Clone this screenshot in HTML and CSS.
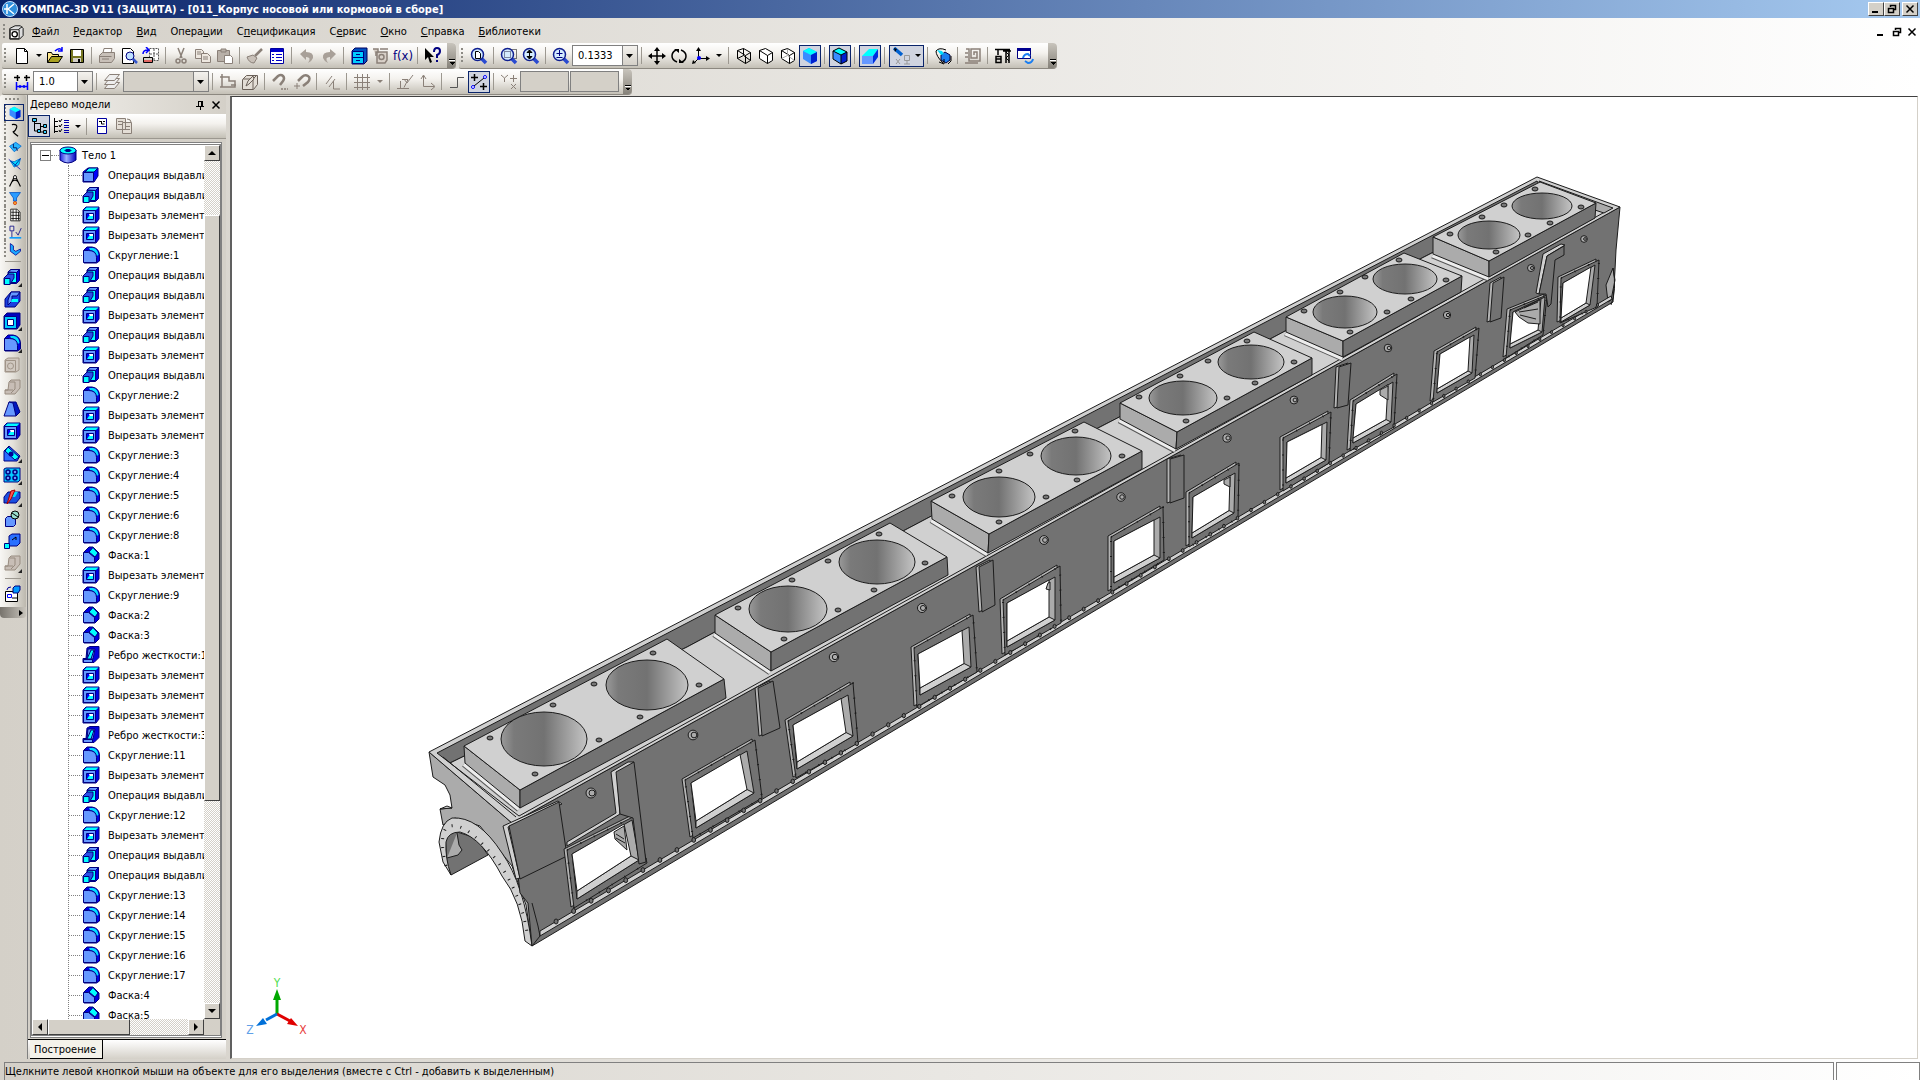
FILE: index.html
```html
<!DOCTYPE html>
<html lang="ru">
<head>
    <meta charset="UTF-8">
    <meta name="viewport" content="width=device-width, initial-scale=1.0">
    <title>КОМПАС-3D V11</title>
    <link rel="stylesheet" href="styles.css">
</head>
<body>

    <!-- Icon set -->
    <svg class="sprite" aria-hidden="true">
        <defs>
            <linearGradient id="g-cyl"><stop offset="0" stop-color="#2222dd"/><stop offset=".4" stop-color="#9db0ff"/><stop offset="1" stop-color="#0000c0"/></linearGradient>
            <linearGradient id="g-bore"><stop offset="0" stop-color="#9a9a9a"/><stop offset=".15" stop-color="#7a7a7a"/><stop offset=".5" stop-color="#727272"/><stop offset="1" stop-color="#c4c4c4"/></linearGradient>
        </defs>
        <symbol id="solid" viewBox="0 0 18 18"><path d="M1 6l5-4h10v8l-4 6H1z" fill="#00f" stroke="#000080"/><path d="M1.500 6.500h10v9h-10z" fill="#6698ff" stroke="#000080"/><path d="M3 6l4-4h9l-4 4z" fill="#0ff" stroke="#000080"/></symbol>
        <symbol id="boss" viewBox="0 0 18 18"><path d="M5 4l3-2.500h8.500v11l-3 3H5z" fill="#0000e0" stroke="#000080"/><path d="M5.500 4.500h8v10h-8z" fill="#0ff" stroke="#000080"/><path d="M5 4l3-2.500h8.500l-3 3z" fill="#6698ff" stroke="#000080"/><path d="M1 10l4-4h6v4l-4 6.500H1z" fill="#2a50e8" stroke="#000080"/><path d="M1.500 10.500h5.500v6H1.500z" fill="#0ff" stroke="#000080"/></symbol>
        <symbol id="cut" viewBox="0 0 18 18"><path d="M1 4l3-3h13v12l-3 4H1z" fill="#0000e0" stroke="#000080"/><path d="M2 4l2.500-2.500h12L14 4z" fill="#0ff"/><path d="M1.500 4.500h12v12h-12z" fill="#6698ff" stroke="#000080"/><path d="M4.500 7.500h7v6h-7z" fill="#00f" stroke="#000080"/><path d="M7 8h4v3H8z" fill="#fff"/><path d="M5 13l2-3h4v3z" fill="#0ff"/></symbol>
        <symbol id="fillet" viewBox="0 0 18 18"><path d="M2 4l3-3h5q7 1 7.500 8v6l-3 2H2z" fill="#0000e0" stroke="#000080"/><path d="M7 2h4q5 1 5.500 7l-2 1Q14 5 8 4z" fill="#0df"/><path d="M1.500 4.500h5q8 0 8 7v5h-13z" fill="#6698ff" stroke="#000080"/></symbol>
        <symbol id="chamfer" viewBox="0 0 18 18"><path d="M2 6l5-5h4l6 6v6l-4 4H2z" fill="#0000e0" stroke="#000080"/><path d="M7 6l4-4.500 5 5.500-3 4z" fill="#0ff" stroke="#000080"/><path d="M1.500 6.500h5l6 5v5h-11z" fill="#6698ff" stroke="#000080"/></symbol>
        <symbol id="rib" viewBox="0 0 18 18"><path d="M5 2l3-1.500h9v11l-5 5H1v-4h3z" fill="#0000e0" stroke="#000080"/><path d="M6 3h7l-2 10H5z" fill="#6698ff" stroke="#000080"/><path d="M9 4h3L9 13H5z" fill="#0ff" stroke="#000080"/><path d="M1.500 13.500h9v3h-9z" fill="#6698ff" stroke="#000080"/></symbol>
        <symbol id="body" viewBox="0 0 18 18"><path d="M1 4v10q8 6 16 0V4z" fill="url(#g-cyl)" stroke="#000080"/><ellipse cx="9" cy="4.500" rx="8" ry="3.500" fill="#0ff" stroke="#000080"/><ellipse cx="9" cy="4.500" rx="3" ry="1" fill="#008" stroke="#000080"/></symbol>
        <symbol id="new" viewBox="0 0 18 18"><path d="M3.500 1.500h8l3 3v12h-11z" fill="#fff" stroke="#000"/><path d="M11.500 1.500v3h3" fill="none" stroke="#000"/></symbol>
        <symbol id="open" viewBox="0 0 18 18"><path d="M1.500 15.500v-10h4l1 2h6v2" fill="#ffe78a" stroke="#000"/><path d="M1.500 15.500l4-6h11l-4 6z" fill="#a8a020" stroke="#000"/><path d="M9 4q4-4 7-1M16 0v4h-4" fill="none" stroke="#00f" stroke-width="1.500"/></symbol>
        <symbol id="save" viewBox="0 0 18 18"><path d="M2.500 2.500h13v13h-13z" fill="#777722" stroke="#000"/><path d="M5 3h8v6H5z" fill="#fff"/><path d="M5 11h8v4H5z" fill="#d4d0c8"/><path d="M10 12h2v3h-2z"/></symbol>
        <symbol id="print" viewBox="0 0 18 18"><g fill="#c8c0b8" stroke="#8a8078"><path d="M5 6l1-4.500h8L13 6z" fill="#fff"/><path d="M1.500 8.500l3-3h12v6l-3 4h-12z"/><path d="M2 9.500h11.500M4 12h7"/></g></symbol>
        <symbol id="preview" viewBox="0 0 18 18"><path d="M2.500 1.500h8l3 3v12h-11z" fill="#fff" stroke="#000"/><circle cx="10" cy="9" r="4" fill="#bfe0ff" stroke="#000080"/><path d="M13 12l4 4" stroke="#3355cc" stroke-width="2.500"/></symbol>
        <symbol id="wizard" viewBox="0 0 18 18"><path d="M7.500 1.500h9v12h-9zM12 2v11M8 7h9" fill="#fff" stroke="#555" stroke-dasharray="2 1"/><path d="M1.500 10.500h9v5h-9z" fill="#d4d0c8" stroke="#000"/><path d="M2 14h8" stroke="#e00"/><path d="M1 7q0-4 5-4M4 0l3 3-3 3" fill="none" stroke="#00f" stroke-width="1.500"/></symbol>
        <symbol id="scissors" viewBox="0 0 18 18"><g fill="none" stroke="#8a8078" stroke-width="1.500"><path d="M6 1l4 10M12 1L8 11"/><circle cx="6" cy="14" r="2"/><circle cx="12" cy="14" r="2"/></g></symbol>
        <symbol id="copy" viewBox="0 0 18 18"><g fill="#eee8e0" stroke="#8a8078"><path d="M1.500 2.500h6l2 2v7h-8z"/><path d="M7.500 6.500h6l3 3v6h-9z"/><path d="M3 5h4M3 7h4M9 10h5M9 12h5"/></g></symbol>
        <symbol id="paste" viewBox="0 0 18 18"><g fill="#b8b0a8" stroke="#8a8078"><path d="M1.500 3.500h12v11h-12z"/><path d="M5 2h5v3H5z"/><path d="M8.500 8.500h6l2 2v6h-8z" fill="#fff"/></g></symbol>
        <symbol id="brush" viewBox="0 0 18 18"><path d="M1 10l6-2 4 3-3 5q-5 0-7-6z" fill="#c8c0b8" stroke="#8a8078"/><path d="M9 9l7-7" stroke="#8a8078" stroke-width="2.500"/></symbol>
        <symbol id="props" viewBox="0 0 18 18"><path d="M2.500 1.500h13v15h-13z" fill="#fff" stroke="#0000a0"/><path d="M3 2h12v3H3z" fill="#00c"/><path d="M4 7.500h2M4 10.500h2M4 13.500h2M8 7.500h6M8 10.500h6M8 13.500h6" stroke="#00c"/></symbol>
        <symbol id="undo" viewBox="0 0 18 18"><path d="M2 7l6-5v3q8 0 7 6-1 3-5 5 4-6-2-6v3z" fill="#a8a098"/></symbol>
        <symbol id="redo" viewBox="0 0 18 18"><path d="M16 7l-6-5v3Q2 5 3 11q1 3 5 5-4-6 2-6v3z" fill="#a8a098"/></symbol>
        <symbol id="vars" viewBox="0 0 18 18"><path d="M2 4l3-3h12v13l-3 3H2z" fill="#0050c0" stroke="#000060"/><path d="M2.500 4.500h11v12h-11z" fill="#0cf" stroke="#000080"/><path d="M2 10.500h11M6 7.500h4M6 13.500h4" stroke="#000080"/></symbol>
        <symbol id="lib" viewBox="0 0 18 18"><g fill="#d8d0c8" stroke="#8a8078" stroke-width="1.500"><path d="M5 5h10v8l-2 3H5z"/><circle cx="9.500" cy="10" r="2.500"/><path d="M1 2h5v3H4v4M8 2h8"/></g></symbol>
        <symbol id="help" viewBox="0 0 18 18"><path d="M1 1v12l3-3 2 6 2-1-2-5h4z"/><path d="M10 5q0-4 3-4t3 3-3 4v3M13 13v2" fill="none" stroke="#000080" stroke-width="2"/></symbol>
        <symbol id="zoom" viewBox="0 0 18 18"><path d="M11 11l5 5" stroke="#2a4ad0" stroke-width="3.500"/><circle cx="7.500" cy="7.500" r="6" fill="#d4ecff" stroke="#102090" stroke-width="1.500"/></symbol>
        <symbol id="zoom-page" viewBox="0 0 18 18"><use href="#zoom"/><path d="M5.500 4.500h3l2 2v5h-5z" fill="#fff" stroke="#000"/></symbol>
        <symbol id="zoom-win" viewBox="0 0 18 18"><path d="M8.500 2.500h8v9h-8z" fill="none" stroke="#000" stroke-dasharray="1 1"/><use href="#zoom"/><path d="M4.500 4.500h6v6h-6z" fill="none" stroke="#224" stroke-dasharray="1 1"/></symbol>
        <symbol id="zoom-dyn" viewBox="0 0 18 18"><use href="#zoom"/><path d="M7.500 3v9M5 5.500h5L7.500 3zM5 9.500h5L7.500 12z" stroke="#000"/></symbol>
        <symbol id="zoom-pm" viewBox="0 0 18 18"><use href="#zoom"/><path d="M7.500 3v6M4.500 6.500h6M4.500 10.500h6" stroke="#000080"/></symbol>
        <symbol id="move" viewBox="0 0 18 18"><path d="M9 2v14M2 9h14" stroke="#000" stroke-width="1.500"/><path d="M9 0l3 4H6zM9 18l3-4H6zM0 9l4-3v6zM18 9l-4-3v6z"/></symbol>
        <symbol id="rotate" viewBox="0 0 18 18"><path d="M7 15Q2 13 2 9t4-6M11 3q5 2 5 6t-4 6" fill="none" stroke="#000" stroke-width="1.500"/><path d="M4 2h5v4zM14 16H9v-4z"/></symbol>
        <symbol id="orient" viewBox="0 0 18 18"><path d="M6.500 2v9.500H16M7 11l-5 5" fill="none" stroke="#000"/><path d="M6.500 0l2.500 4H4zM18 11.500l-4-2.500v5zM0 17l1-4 3 3z"/><circle cx="7" cy="11" r="2" fill="#00f"/></symbol>
        <symbol id="wire" viewBox="0 0 18 18"><path d="M2.500 3.500l6-2 7 4v8l-5 3-8-5zM2.500 3.500l8 5v8M10.500 8.500l5-3M8.500 1.500v7l7 5M8.500 8.500l-6 3" fill="none" stroke="#000"/></symbol>
        <symbol id="nohid" viewBox="0 0 18 18"><path d="M2.500 3.500l6-2 7 4v8l-5 3-8-5zM2.500 3.500l8 5v8M10.500 8.500l5-3" fill="#fff" stroke="#000"/></symbol>
        <symbol id="thin" viewBox="0 0 18 18"><use href="#nohid"/><path d="M8.500 2v6.500l7 5M8.500 8.500l-6 3" fill="none" stroke="#aaa"/></symbol>
        <symbol id="shade" viewBox="0 0 18 18"><path d="M2 4l6-3 8 4v9l-6 3-8-5z" fill="#3a8cff"/><path d="M2 4l6-3 8 4-6 3z" fill="#0ff"/><path d="M10 8l6-3v9l-6 3z" fill="#0020d0"/></symbol>
        <symbol id="shade-edge" viewBox="0 0 18 18"><use href="#shade"/><path d="M2 4l6-3 8 4v9l-6 3-8-5zM2 4l8 4v9M10 8l6-3" fill="none" stroke="#000"/></symbol>
        <symbol id="persp" viewBox="0 0 18 18"><path d="M1 9l7-7h9l-5 7z" fill="#0ff"/><path d="M1 9h11v8H1z" fill="#6698ff"/><path d="M12 9l5-7v8l-5 7z" fill="#0030e0"/></symbol>
        <symbol id="light" viewBox="0 0 18 18"><path d="M1 1l8 7" stroke="#0060d0" stroke-width="3.500"/><path d="M1 1l3 1-2 3z"/><path d="M11.500 8.500h5v5h-5zM14 14v3M11 17h6M3 12l4 5M7 12l-4 5" fill="none" stroke="#999"/></symbol>
        <symbol id="rebuild" viewBox="0 0 18 18"><path d="M7 8l4-3 5 3v5l-4 3-5-3z" fill="#1a7ef0" stroke="#004"/><path d="M12 3Q5 0 2 4q0 5 7 12M5 15l5 2V12M17 9v5l-3 3" fill="none" stroke="#000"/><path d="M3 3l5 1 2 3-3 1z" fill="#0df"/></symbol>
        <symbol id="spiral" viewBox="0 0 18 18"><g fill="none" stroke="#8a8078" stroke-width="1.500"><path d="M2 2h3v12h11V2H7v9h6V5h-3v3"/><path d="M1 6h3M1 10h3M1 16h13"/></g></symbol>
        <symbol id="crane" viewBox="0 0 18 18"><path d="M1 2.500h15M12 2v14M15 2v14M9 4h8M4 3v5M2 9.500h5v6H2zM2 12h5" fill="none" stroke="#000" stroke-width="1.500"/><path d="M12 5l3 3-3 3 3 3" fill="none" stroke="#000"/></symbol>
        <symbol id="refresh" viewBox="0 0 18 18"><path d="M1.500 1.500h13v10h-13z" fill="#fff" stroke="#000080"/><path d="M1 1h14v3H1z" fill="#000090"/><path d="M7 11q1-4 5-4l2 2M17 12q-1 4-5 4l-3-2" fill="none" stroke="#1a7ef0" stroke-width="2"/></symbol>
        <symbol id="step" viewBox="0 0 18 18"><path d="M1 4.500h6M4.500 2v6M11 4.500h6M13.500 2v6" stroke="#000" stroke-width="1.500"/><path d="M3 13.500h12M3.500 9v8M14.500 9v8M7 12v3M11 12v3" stroke="#00f" stroke-width="1.500"/></symbol>
        <symbol id="layers" viewBox="0 0 18 18"><g fill="#eee" stroke="#8a8078"><path d="M1.500 15.500l5-6h10l-5 6z"/><path d="M1.500 11.500l5-6h10l-5 6z"/><path d="M1.500 7.500l5-6h10l-5 6z"/></g></symbol>
        <symbol id="contour" viewBox="0 0 18 18"><g fill="none" stroke="#8a8078" stroke-width="1.500"><path d="M3 1v13h13V8h-6V4H1M1 14h4M12 12h5"/></g></symbol>
        <symbol id="sketch" viewBox="0 0 18 18"><g fill="#e4ded6" stroke="#6a6058"><path d="M1.500 6.500l4-4h11v9l-4 5h-11z"/><path d="M12 6v10M12 6l4-4M2 6h10"/><path d="M5 13l2-5 5-5 1 3-5 5z"/></g></symbol>
        <symbol id="magnet" viewBox="0 0 18 18"><path d="M2 8l5-5q3-2 5 0t0 5l-3 4" fill="none" stroke="#8a8078" stroke-width="2.500"/><path d="M10 16h7" stroke="#8a8078" stroke-dasharray="2 1" stroke-width="1.500"/></symbol>
        <symbol id="magnet2" viewBox="0 0 18 18"><path d="M5 8l4-4q3-3 6-1t0 6l-5 4" fill="none" stroke="#8a8078" stroke-width="2.500"/><path d="M1 13h6M4 10v6" stroke="#8a8078"/></symbol>
        <symbol id="paral" viewBox="0 0 18 18"><path d="M3 11l6-8M6 14l6-8M10.500 8v8H17" fill="none" stroke="#8a8078"/></symbol>
        <symbol id="grid" viewBox="0 0 18 18"><path d="M1 4.500h16M1 9.500h16M1 14.500h16M4.500 1v16M9.500 1v16M14.500 1v16" stroke="#8a8078"/></symbol>
        <symbol id="check" viewBox="0 0 18 18"><path d="M1 15.500h12M4.500 8v7M6 6.500h6l-4 8M8 6l3 4 6-8" fill="none" stroke="#8a8078"/></symbol>
        <symbol id="lcs" viewBox="0 0 18 18"><path d="M5.500 3v10.500H16M3 6l2.500-4L8 6M13 10l4 3.500-4 3.500" fill="none" stroke="#8a8078"/></symbol>
        <symbol id="ortho" viewBox="0 0 18 18"><path d="M2 14.500h7.500v-10H16" fill="none" stroke="#555"/></symbol>
        <symbol id="snap" viewBox="0 0 18 18"><path d="M1 4.500h7M4.500 1v7M10 13.500h7M13.500 10v7" stroke="#000" stroke-width="1.500"/><path d="M4 13l10-8" stroke="#000"/><circle cx="3" cy="14" r="1.500" fill="#fff" stroke="#00f"/><circle cx="15" cy="4" r="1.500" fill="#fff" stroke="#00f"/></symbol>
        <symbol id="yx" viewBox="0 0 18 18"><path d="M1 2l3.500 3L8 2M4.500 5v4M10 5.500h7M13.500 2v7M11 11l5 5M16 11l-5 5" fill="none" stroke="#8a8078"/></symbol>
        <symbol id="spline" viewBox="0 0 18 18"><path d="M5 2q8-1 6 4T7 11t6 6" fill="none" stroke="#000" stroke-width="1.500"/></symbol>
        <symbol id="surf" viewBox="0 0 18 18"><path d="M2 8l8-5 7 5-9 7z" fill="#29b6ff" stroke="#06c"/><path d="M7 5v5h4l1 4" fill="none" stroke="#004"/></symbol>
        <symbol id="surf2" viewBox="0 0 18 18"><path d="M3 5l5 1 8-4-2 8-6 3z" fill="#0df" stroke="#06c"/><path d="M1 3l15 13M16 2L8 12" stroke="#009"/></symbol>
        <symbol id="compass" viewBox="0 0 18 18"><path d="M9 2l-7 14M9 2l7 14M5 10q4-4 8 0" fill="none" stroke="#000" stroke-width="1.500"/><circle cx="9" cy="4" r="2" fill="#fff" stroke="#000"/></symbol>
        <symbol id="funnel" viewBox="0 0 18 18"><path d="M2 2h14l-5 7v4H7V9z" fill="#2a9cff" stroke="#0050c0"/><circle cx="9" cy="15.500" r="2" fill="#fa3" stroke="#c30"/></symbol>
        <symbol id="sheet" viewBox="0 0 18 18"><path d="M3.500 1.500h8l4 4v11h-12zM6.500 2v14M10.500 2v14M13.500 5v11M4 5.500h11M4 9.500h11M4 13.500h11" fill="#fff" stroke="#000"/></symbol>
        <symbol id="dims" viewBox="0 0 18 18"><path d="M2.500 1.500h5v6h-5zM5 8v8M10 9l3 4 4-9" fill="none" stroke="#000080"/><path d="M2 16.500h15" stroke="#09f" stroke-width="2"/></symbol>
        <symbol id="sheetmet" viewBox="0 0 18 18"><path d="M3 2l4 3v5l3 2 6-3v3l-6 5-7-5z" fill="#1aa8ff" stroke="#000090"/></symbol>
        <symbol id="kin" viewBox="0 0 18 18"><path d="M2 9l6-7h9v9l-5 6H2z" fill="#1a40e0" stroke="#000080"/><path d="M8 2h9l-3 4H9v5L5 15v-5z" fill="#6698ff" stroke="#000080"/><path d="M9 9h6v3H8z" fill="#0ff"/></symbol>
        <symbol id="cut2" viewBox="0 0 18 18"><path d="M1 4l3-3h13v12l-3 4H1z" fill="#0000c0" stroke="#000080"/><path d="M1.500 4.500h12v12h-12z" fill="#0cf" stroke="#000080"/><path d="M4.500 7.500h6v6h-6z" fill="#fff" stroke="#000080"/></symbol>
        <symbol id="gray1" viewBox="0 0 18 18"><g fill="#d0c8c0" stroke="#a09488"><path d="M2 4l3-2h11v12l-3 2H2z"/><path d="M2.500 4.500h10v11h-10z"/><circle cx="7.500" cy="10" r="3"/></g></symbol>
        <symbol id="gray2" viewBox="0 0 18 18"><g fill="#c8beb6" stroke="#988c80"><path d="M6 4l2-2h9v8l-5 6H2v-4h3z"/><path d="M7 4h5v7l-4 4M2 12h8"/></g></symbol>
        <symbol id="draft" viewBox="0 0 18 18"><path d="M6 2h7l4 10-4 4z" fill="#0018c0" stroke="#000080"/><path d="M6 2l4 1 3 13H1z" fill="#6698ff" stroke="#000080"/></symbol>
        <symbol id="section" viewBox="0 0 18 18"><path d="M1 7l5-5 11 10-3 5H1z" fill="#2a6cff" stroke="#000080"/><path d="M5 3l11 10-4 3L2 7z" fill="#0ff" stroke="#000080"/><circle cx="8" cy="10" r="2.500" fill="#009"/></symbol>
        <symbol id="array" viewBox="0 0 18 18"><path d="M1 3l2-1h14v12l-2 2H1z" fill="#0cf" stroke="#000080"/><g fill="#6698ff" stroke="#000080" stroke-width="1.500"><circle cx="5" cy="6" r="2"/><circle cx="12" cy="6" r="2"/><circle cx="5" cy="12" r="2"/><circle cx="12" cy="12" r="2"/></g></symbol>
        <symbol id="slice" viewBox="0 0 18 18"><path d="M1 9l4-5h12v6l-4 5H1z" fill="#1a50e0" stroke="#000080"/><path d="M10 4h5l-3 5H8z" fill="#0df"/><path d="M8 3L4 16l4-5 4-9z" fill="#f55" stroke="#a00"/></symbol>
        <symbol id="bool" viewBox="0 0 18 18"><path d="M2.500 8.500l2-2h8v8l-2 2h-8z" fill="#6698ff" stroke="#000080"/><circle cx="12" cy="5" r="4" fill="#9dc" stroke="#000"/><path d="M9 3l6 4" stroke="#000"/></symbol>
        <symbol id="detail" viewBox="0 0 18 18"><path d="M6 4l3-2h8v9l-3 3H6z" fill="#2a70ff" stroke="#000080"/><path d="M1.500 11.500h5v5h-5z" fill="#0ff" stroke="#000080"/><path d="M9 8l4-3M13 5v3" stroke="#000"/></symbol>
        <symbol id="tosheet" viewBox="0 0 18 18"><path d="M2.500 6.500h12v10h-12zM9 13h6" fill="#fff" stroke="#000"/><path d="M4.500 9.500h4v3h-4z" fill="#fff" stroke="#00f"/><path d="M10 3l2-2h5v4l-2 3h-5z" fill="#09f" stroke="#000080"/><path d="M4 5q0-3 4-3" fill="none" stroke="#009"/></symbol>
        <symbol id="tree" viewBox="0 0 18 18"><path d="M4.500 3v11h3M4.500 6.500h6M10.500 6v9h3M10 9.500h4" fill="none" stroke="#000"/><path d="M2.500 1.500h4v3h-4zM7.500 12.500h3v3h-3zM13.500 7.500h3v3h-3zM13.500 13.500h3v3h-3z" fill="#3cf" stroke="#000"/></symbol>
        <symbol id="list" viewBox="0 0 18 18"><path d="M2.500 1v15M2 4.500h4M2 9.500h4M2 14.500h4M7 3l1 2 2-3M7 8l1 2 2-3M7 13l1 2 2-3" fill="none" stroke="#000"/><path d="M12 3.500h5M12 5.500h5M12 8.500h5M12 10.500h5M12 13.500h5M12 15.500h5" stroke="#00a"/></symbol>
        <symbol id="doc" viewBox="0 0 18 18"><path d="M4.500 1.500h9v15h-9zM5 9.500h8" fill="#fff" stroke="#0000a0"/><path d="M6 4.500h3M8.500 4v3h3M10 4.500h2" fill="none" stroke="#000"/></symbol>
        <symbol id="doc2" viewBox="0 0 18 18"><path d="M1.500 1.500h9v11h-9zM7.500 5.500h9v11h-9zM3 4.500h5M3 7.500h4M10 9.500h5M10 12.500h5M12 2q4 0 4 3" fill="#e4ded6" stroke="#8a8078"/></symbol>
        <symbol id="cube" viewBox="0 0 18 18"><path d="M2 5l6-3h6l3 3v8l-4 4H2z" fill="#ddd" stroke="#000"/><path d="M2.500 6.500h10v10h-10z" fill="#fff" stroke="#000"/><circle cx="7.500" cy="11.500" r="3" fill="#fff" stroke="#000" stroke-width="1.500"/><path d="M12 6l4-3" stroke="#000"/></symbol>
        <symbol id="w-min" viewBox="0 0 10 10"><path d="M1 8h6" stroke="#000" stroke-width="2"/></symbol>
        <symbol id="w-rest" viewBox="0 0 10 10"><path d="M3.500 3V1.500h5v4H7M1.500 4.500h5v4h-5zM3 1.500h6M1 4.500h6" fill="none" stroke="#000" stroke-width="1.500"/></symbol>
        <symbol id="w-close" viewBox="0 0 10 10"><path d="M1.500 1.500l7 7M8.500 1.500l-7 7" stroke="#000" stroke-width="1.500"/></symbol>
        <symbol id="pin" viewBox="0 0 10 10"><path d="M3 1.500h4M3.500 1v5M6.500 1v5M7.500 1v5M1 6.500h8M5.500 7v3" stroke="#000"/></symbol>
    </svg>

    <header class="titlebar">
        <svg class="logo" viewBox="0 0 16 16"><circle cx="8" cy="8" r="7.500" fill="#2f8fdc" stroke="#bfe0ff"/><path d="M5 3v10M6 8l6-5M6 8l6 5M2 8h3" stroke="#fff" stroke-width="1.500" fill="none"/></svg>
        <h1>КОМПАС-3D V11 (ЗАЩИТА) - [011_Корпус носовой или кормовой в сборе]</h1>
        <div class="winbtns">
            <button aria-label="Свернуть"><svg><use href="#w-min"/></svg></button>
            <button aria-label="Развернуть"><svg><use href="#w-rest"/></svg></button>
            <button class="close" aria-label="Закрыть"><svg><use href="#w-close"/></svg></button>
        </div>
    </header>

    <nav class="menubar">
        <i class="grip"></i>
        <svg class="ico"><use href="#cube"/></svg>
        <a href="#"><u>Ф</u>айл</a>
        <a href="#"><u>Р</u>едактор</a>
        <a href="#"><u>В</u>ид</a>
        <a href="#">Опера<u>ц</u>ии</a>
        <a href="#">С<u>п</u>ецификация</a>
        <a href="#">С<u>е</u>рвис</a>
        <a href="#"><u>О</u>кно</a>
        <a href="#"><u>С</u>правка</a>
        <a href="#"><u>Б</u>иблиотеки</a>
        <div class="mdibtns">
            <button aria-label="Свернуть документ"><svg><use href="#w-min"/></svg></button>
            <button aria-label="Восстановить документ"><svg><use href="#w-rest"/></svg></button>
            <button aria-label="Закрыть документ"><svg><use href="#w-close"/></svg></button>
        </div>
    </nav>

    <div class="toolrow">
        <div class="toolbar">
            <i class="grip"></i>
            <button class="tb" aria-label="Создать"><svg><use href="#new"/></svg></button><button class="drop" aria-label="Список"></button>
            <button class="tb" aria-label="Открыть"><svg><use href="#open"/></svg></button>
            <button class="tb" aria-label="Сохранить"><svg><use href="#save"/></svg></button>
            <i class="sep"></i>
            <button class="tb" aria-label="Печать"><svg><use href="#print"/></svg></button>
            <button class="tb" aria-label="Просмотр"><svg><use href="#preview"/></svg></button>
            <button class="tb" aria-label="Мастер"><svg><use href="#wizard"/></svg></button>
            <i class="sep"></i>
            <button class="tb" aria-label="Вырезать"><svg><use href="#scissors"/></svg></button>
            <button class="tb" aria-label="Копировать"><svg><use href="#copy"/></svg></button>
            <button class="tb" aria-label="Вставить"><svg><use href="#paste"/></svg></button>
            <i class="sep"></i>
            <button class="tb" aria-label="Копировать свойства"><svg><use href="#brush"/></svg></button>
            <button class="tb" aria-label="Свойства"><svg><use href="#props"/></svg></button>
            <i class="sep"></i>
            <button class="tb" aria-label="Отменить"><svg><use href="#undo"/></svg></button>
            <button class="tb" aria-label="Повторить"><svg><use href="#redo"/></svg></button>
            <i class="sep"></i>
            <button class="tb" aria-label="Менеджер"><svg><use href="#vars"/></svg></button>
            <button class="tb" aria-label="Библиотека"><svg><use href="#lib"/></svg></button>
            <button class="tb fx">f(x)</button>
            <i class="sep"></i>
            <button class="tb" aria-label="Справка"><svg><use href="#help"/></svg></button>
            <i class="cap"></i>
        </div>
        <div class="toolbar">
            <i class="grip"></i>
            <button class="tb" aria-label="Показать все"><svg><use href="#zoom-page"/></svg></button>
            <i class="sep"></i>
            <button class="tb" aria-label="Увеличить рамкой"><svg><use href="#zoom-win"/></svg></button>
            <button class="tb" aria-label="Приблизить"><svg><use href="#zoom-dyn"/></svg></button>
            <i class="sep"></i>
            <button class="tb" aria-label="Масштаб"><svg><use href="#zoom-pm"/></svg></button>
            <select class="combo scale" aria-label="Текущий масштаб"><option>0.1333</option></select>
            <i class="sep"></i>
            <button class="tb" aria-label="Сдвинуть"><svg><use href="#move"/></svg></button>
            <button class="tb" aria-label="Повернуть"><svg><use href="#rotate"/></svg></button>
            <button class="tb" aria-label="Ориентация"><svg><use href="#orient"/></svg></button><button class="drop roomy" aria-label="Список"></button>
            <i class="sep"></i>
            <button class="tb" aria-label="Каркас"><svg><use href="#wire"/></svg></button>
            <button class="tb" aria-label="Без невидимых"><svg><use href="#nohid"/></svg></button>
            <button class="tb" aria-label="Тонкие линии"><svg><use href="#thin"/></svg></button>
            <button class="tb on" aria-label="Полутоновое"><svg><use href="#shade"/></svg></button>
            <i class="sep"></i>
            <button class="tb on" aria-label="С каркасом"><svg><use href="#shade-edge"/></svg></button>
            <i class="sep"></i>
            <button class="tb on" aria-label="Перспектива"><svg><use href="#persp"/></svg></button>
            <i class="sep"></i>
            <button class="tb on wide" aria-label="Упрощения"><svg><use href="#light"/></svg><i class="arrow"></i></button>
            <i class="sep"></i>
            <button class="tb" aria-label="Перестроить"><svg><use href="#rebuild"/></svg></button>
            <i class="sep"></i>
            <button class="tb" aria-label="Разнести"><svg><use href="#spiral"/></svg></button>
            <i class="sep"></i>
            <button class="tb" aria-label="Конструкции"><svg><use href="#crane"/></svg></button>
            <button class="tb" aria-label="Обновить"><svg><use href="#refresh"/></svg></button>
            <i class="cap far"></i>
        </div>
    </div>

    <div class="toolrow">
        <div class="toolbar">
            <i class="grip"></i>
            <button class="tb" aria-label="Шаг"><svg><use href="#step"/></svg></button>
            <select class="combo stepval" aria-label="Шаг курсора"><option>1.0</option></select>
            <i class="sep"></i>
            <button class="tb" aria-label="Слои"><svg><use href="#layers"/></svg></button>
            <select class="combo layer" aria-label="Слой" disabled><option></option></select>
            <i class="sep"></i>
            <button class="tb" aria-label="Контур"><svg><use href="#contour"/></svg></button>
            <button class="tb" aria-label="Эскиз"><svg><use href="#sketch"/></svg></button>
            <i class="sep"></i>
            <button class="tb" aria-label="Привязки"><svg><use href="#magnet"/></svg></button>
            <button class="tb" aria-label="Запрет привязок"><svg><use href="#magnet2"/></svg></button>
            <i class="sep"></i>
            <button class="tb" aria-label="Параметризация"><svg><use href="#paral"/></svg></button>
            <i class="sep"></i>
            <button class="tb" aria-label="Сетка"><svg><use href="#grid"/></svg></button><button class="drop roomy off" aria-label="Список"></button>
            <i class="sep"></i>
            <button class="tb" aria-label="Проверка"><svg><use href="#check"/></svg></button>
            <button class="tb" aria-label="ЛСК"><svg><use href="#lcs"/></svg></button>
            <i class="sep"></i>
            <button class="tb" aria-label="Ортогонально"><svg><use href="#ortho"/></svg></button>
            <button class="tb on" aria-label="Округление"><svg><use href="#snap"/></svg></button>
            <i class="sep"></i>
            <button class="tb" aria-label="Координаты"><svg><use href="#yx"/></svg></button>
            <input class="coord" aria-label="Y" disabled><input class="coord" aria-label="X" disabled>
            <i class="cap"></i>
        </div>
    </div>

    <main class="workspace">
        <div class="sidebar">
            <div class="compact">
                <button class="on" aria-label="Детали"><svg><use href="#shade"/></svg></button>
                <button aria-label="Кривые"><svg><use href="#spline"/></svg></button>
                <button aria-label="Поверхности"><svg><use href="#surf"/></svg></button>
                <button aria-label="Вспомогательная геометрия"><svg><use href="#surf2"/></svg></button>
                <button aria-label="Измерения"><svg><use href="#compass"/></svg></button>
                <button aria-label="Фильтры"><svg><use href="#funnel"/></svg></button>
                <button aria-label="Спецификация"><svg><use href="#sheet"/></svg></button>
                <button aria-label="Оформление"><svg><use href="#dims"/></svg></button>
                <button aria-label="Листовое тело"><svg><use href="#sheetmet"/></svg></button>
            </div>
            <hr>
            <div class="ops">
                <button class="more" aria-label="Выдавливание"><svg><use href="#boss"/></svg></button>
                <button aria-label="Кинематическая"><svg><use href="#kin"/></svg></button>
                <button class="more" aria-label="Вырезать"><svg><use href="#cut2"/></svg></button>
                <button class="more" aria-label="Скругление"><svg><use href="#fillet"/></svg></button>
                <button aria-label="Отверстие"><svg><use href="#gray1"/></svg></button>
                <button aria-label="Ребро"><svg><use href="#gray2"/></svg></button>
                <button aria-label="Уклон"><svg><use href="#draft"/></svg></button>
                <button aria-label="Оболочка"><svg><use href="#cut"/></svg></button>
                <button class="more" aria-label="Сечение"><svg><use href="#section"/></svg></button>
                <button class="more" aria-label="Массив"><svg><use href="#array"/></svg></button>
                <button class="more" aria-label="Линия разъема"><svg><use href="#slice"/></svg></button>
                <button aria-label="Булева операция"><svg><use href="#bool"/></svg></button>
                <button aria-label="Деталь-заготовка"><svg><use href="#detail"/></svg></button>
                <button class="more" aria-label="Тела"><svg><use href="#gray2"/></svg></button>
            </div>
            <hr>
            <div class="ops">
                <button aria-label="Новый чертеж"><svg><use href="#tosheet"/></svg></button>
            </div>
            <div class="endcap"></div>
        </div>

        <section class="panel">
            <div class="panel-title">
                <h2>Дерево модели</h2>
                <button aria-label="Закрепить"><svg><use href="#pin"/></svg></button>
                <button aria-label="Закрыть"><svg><use href="#w-close"/></svg></button>
            </div>
            <div class="panel-tools">
                <button class="tb on" aria-label="Дерево"><svg><use href="#tree"/></svg></button>
                <button class="tb" aria-label="Состав"><svg><use href="#list"/></svg></button><button class="drop" aria-label="Список"></button>
                <i class="sep"></i>
                <button class="tb" aria-label="Отношения"><svg><use href="#doc"/></svg></button>
                <button class="tb" aria-label="Дополнительно"><svg><use href="#doc2"/></svg></button>
            </div>
            <div class="treebox">
                <div class="tree">
                    <div class="root"><i class="minus"></i><i class="dots"></i><svg><use href="#body"/></svg>Тело 1</div>
                    <ul>
                        <li><svg><use href="#solid"/></svg>Операция выдавли</li>
                        <li><svg><use href="#boss"/></svg>Операция выдавли</li>
                        <li><svg><use href="#cut"/></svg>Вырезать элемент</li>
                        <li><svg><use href="#cut"/></svg>Вырезать элемент</li>
                        <li><svg><use href="#fillet"/></svg>Скругление:1</li>
                        <li><svg><use href="#boss"/></svg>Операция выдавли</li>
                        <li><svg><use href="#boss"/></svg>Операция выдавли</li>
                        <li><svg><use href="#cut"/></svg>Вырезать элемент</li>
                        <li><svg><use href="#boss"/></svg>Операция выдавли</li>
                        <li><svg><use href="#cut"/></svg>Вырезать элемент</li>
                        <li><svg><use href="#boss"/></svg>Операция выдавли</li>
                        <li><svg><use href="#fillet"/></svg>Скругление:2</li>
                        <li><svg><use href="#cut"/></svg>Вырезать элемент</li>
                        <li><svg><use href="#cut"/></svg>Вырезать элемент</li>
                        <li><svg><use href="#fillet"/></svg>Скругление:3</li>
                        <li><svg><use href="#fillet"/></svg>Скругление:4</li>
                        <li><svg><use href="#fillet"/></svg>Скругление:5</li>
                        <li><svg><use href="#fillet"/></svg>Скругление:6</li>
                        <li><svg><use href="#fillet"/></svg>Скругление:8</li>
                        <li><svg><use href="#chamfer"/></svg>Фаска:1</li>
                        <li><svg><use href="#cut"/></svg>Вырезать элемент</li>
                        <li><svg><use href="#fillet"/></svg>Скругление:9</li>
                        <li><svg><use href="#chamfer"/></svg>Фаска:2</li>
                        <li><svg><use href="#chamfer"/></svg>Фаска:3</li>
                        <li><svg><use href="#rib"/></svg>Ребро жесткости:1</li>
                        <li><svg><use href="#cut"/></svg>Вырезать элемент</li>
                        <li><svg><use href="#cut"/></svg>Вырезать элемент</li>
                        <li><svg><use href="#cut"/></svg>Вырезать элемент</li>
                        <li><svg><use href="#rib"/></svg>Ребро жесткости:3</li>
                        <li><svg><use href="#fillet"/></svg>Скругление:11</li>
                        <li><svg><use href="#cut"/></svg>Вырезать элемент</li>
                        <li><svg><use href="#boss"/></svg>Операция выдавли</li>
                        <li><svg><use href="#fillet"/></svg>Скругление:12</li>
                        <li><svg><use href="#cut"/></svg>Вырезать элемент</li>
                        <li><svg><use href="#boss"/></svg>Операция выдавли</li>
                        <li><svg><use href="#boss"/></svg>Операция выдавли</li>
                        <li><svg><use href="#fillet"/></svg>Скругление:13</li>
                        <li><svg><use href="#fillet"/></svg>Скругление:14</li>
                        <li><svg><use href="#fillet"/></svg>Скругление:15</li>
                        <li><svg><use href="#fillet"/></svg>Скругление:16</li>
                        <li><svg><use href="#fillet"/></svg>Скругление:17</li>
                        <li><svg><use href="#chamfer"/></svg>Фаска:4</li>
                        <li><svg><use href="#chamfer"/></svg>Фаска:5</li>
                    </ul>
                </div>
                <div class="vscroll">
                    <button class="up" aria-label="Вверх"></button>
                    <div class="thumb"></div>
                    <button class="down" aria-label="Вниз"></button>
                </div>
                <div class="hscroll">
                    <button class="left" aria-label="Влево"></button>
                    <div class="thumb"></div>
                    <button class="right" aria-label="Вправо"></button>
                </div>
                <div class="corner"></div>
            </div>
            <div class="tabs"><button class="tab">Построение</button></div>
        </section>

        <section class="viewport">
            <svg id="model" viewBox="232 97 1685 961">
                <g class="edge">
                    <!-- inside of the near end -->
                    <path class="dark" d="M445 834L447 865L451 875L488 855L476 838L457 832z"/>
                    <path class="mid" d="M457 833L459 845L462 850L458 855L447 858" />
                    <!-- end wall -->
                    <path class="mid" d="M429 752L433 777L445 785L450 795L452 808L440 809L443 825L455 818L480 826L512 866L526 905L532 946L540 930L540 830L512 823z"/>
                    <path class="light" d="M440 809L447 806L452 808z"/>
                    <path class="light" d="M451 875L443 862L439 842Q441 822 452 818Q478 816 502 853Q524 884 532 946L525 941Q521 900 502 876Q482 838 460 832Q448 832 446 842Q445 858 451 875z"/>
                    <path fill="none" stroke-dasharray="1 8" stroke-width="3" d="M446 866Q439 838 446 828Q460 818 488 850Q520 885 528 938"/>
                    <!-- near side wall with flange -->
                    <path class="dark" d="M512 823L1620 207L1616 250L1615 270L1613 302L532 946L528 903L520 893z"/>
                    <path class="mid" d="M1613 268L1615 280L1611 300L1608 302L1606 285z"/>
                    <path fill="none" d="M1613 268Q1617 290 1611 305"/>
                    <path class="light" d="M540 931L1611 296L1612 299L540 936z"/>
                    <path fill="none" d="M532 903L538 926L540 936L532 946"/>
                    <!-- rim -->
                    <path class="light" d="M429 752L1537 177L1620 207L512 823z"/>
                    <path class="dark" d="M437 753L1537 181L1545 195L1422 258L1272 338L1100 427L905 530L687 647L450 763z"/>
                    <path class="light" d="M450 763L687 647L905 530L1100 427L1272 338L1422 258L1545 195L1604 212L1612 208L519 816z"/>
                    <path class="mid" d="M1539 181L1613 208L1604 213L1543 193z"/>
                    <path fill="none" d="M443 757L516 817"/>
                    <!-- vertical covers of the first and last windows -->
                    <path class="light" d="M503 826L558 801L562 804L508 827L520 878L516 879z"/>
                    <path class="dark" d="M509 826L559 802L567 856L520 879z"/>
                </g>
            </svg>
        </section>
    </main>

    <footer class="statusbar">
        <p>Щелкните левой кнопкой мыши на объекте для его выделения (вместе с Ctrl - добавить к выделенным)</p>
        <span></span>
    </footer>

    <script src="model.js"></script>
</body>
</html>
```

FILE: model.js
```js
const NS = "http://www.w3.org/2000/svg";
const model = document.getElementById("model");
const edges = model.querySelector(".edge");

function add(tag, attrs, parent) {
    const el = document.createElementNS(NS, tag);
    for (const k in attrs) el.setAttribute(k, attrs[k]);
    (parent || edges).appendChild(el);
    return el;
}

function poly(cls, pts) {
    add("polygon", { class: cls, points: pts.join(" ") });
}

// cylinder pads: top face L, T, R, B, then the lower ends of L, B, R
const pads = [
    [[1433,237],[1540,182],[1596,203],[1489,261],[1433,254],[1489,277],[1595,218]],
    [[1286,317],[1404,253],[1462,276],[1343,341],[1286,332],[1343,357],[1461,292]],
    [[1120,403],[1254,332],[1312,358],[1177,432],[1120,419],[1176,449],[1312,375]],
    [[931,501],[1084,422],[1142,451],[989,534],[932,519],[988,553],[1142,469]],
    [[715,615],[890,523],[947,557],[771,652],[715,633],[771,671],[948,575]],
    [[464,746],[667,639],[724,679],[520,790],[465,763],[520,808],[726,698]]
];
pads.forEach(([l, t, r, b, l2, b2, r2]) => {
    add("path", { d: `M${l2}L${b2}`, class: "weld-line" });
    add("path", { d: `M${l2}L${b2}`, class: "weld" });
    poly("mid", [l, b, b2, l2]);
    poly("dark", [b, r, r2, b2]);
    poly("light", [l, t, r, b]);
});

// bores: cx, cy, rx, ry
const bores = [
    [544,739,43,27],[647,685,41,25],[788,609,39,23],[877,562,38,22],
    [999,497,36,20],[1076,456,35,19],[1183,398,34,17],[1251,362,33,17],
    [1345,312,32,16],[1405,279,32,15],[1489,235,31,14],[1542,206,30,13]
];
bores.forEach(([cx, cy, rx, ry]) => add("ellipse", { cx, cy, rx, ry, class: "bore" }));

const studs = [
    [490,738],[553,705],[535,774],[599,740],[594,684],[653,653],[699,685],[640,717],
    [738,608],[792,580],[784,639],[838,610],[828,561],[879,534],[925,563],[874,590],
    [952,496],[999,471],[999,522],[1046,497],[1030,454],[1075,431],[1122,456],[1077,480],
    [1139,397],[1180,376],[1186,421],[1227,398],[1208,361],[1247,341],[1294,362],[1255,383],
    [1304,311],[1340,292],[1350,332],[1387,312],[1365,277],[1399,260],[1446,280],[1411,299],
    [1450,234],[1482,217],[1496,252],[1528,235],[1504,205],[1535,189],[1581,207],[1550,223]
];
studs.forEach(([cx, cy]) => add("ellipse", { cx, cy, rx: 3, ry: 2, class: "stud" }));

// hatches: frame TL TR BR BL, opening TL TR BR BL
const hatches = [
    [[567,850],[635,816],[647,863],[574,908],[572,854],[632,820],[639,860],[577,899]],
    [[685,780],[755,740],[762,798],[693,838],[691,783],[747,751],[754,793],[696,828]],
    [[788,721],[853,683],[858,743],[796,778],[793,725],[848,695],[853,736],[797,769]],
    [[914,648],[973,615],[977,672],[917,707],[918,654],[969,627],[971,667],[920,695]],
    [[1003,600],[1060,566],[1061,623],[1005,655],[1007,603],[1055,577],[1055,620],[1007,647]],
    [[1111,537],[1163,507],[1164,560],[1111,592],[1114,541],[1160,517],[1160,558],[1114,583]],
    [[1189,493],[1239,463],[1238,518],[1189,547],[1193,497],[1235,473],[1234,513],[1192,538]],
    [[1283,438],[1331,412],[1329,463],[1283,491],[1287,442],[1327,422],[1326,460],[1286,483]],
    [[1353,401],[1397,374],[1394,427],[1350,451],[1356,404],[1393,382],[1391,422],[1353,443]],
    [[1437,352],[1479,328],[1475,378],[1433,402],[1440,354],[1474,335],[1472,373],[1437,393]],
    [[1510,310],[1547,295],[1543,335],[1506,358],[1513,312],[1545,297],[1542,332],[1510,348]],
    [[1561,278],[1599,260],[1597,307],[1560,323],[1563,283],[1595,265],[1590,305],[1561,322]]
];
hatches.forEach(([a, b, c, d, e, f, g, h]) => {
    const k = Math.round((f[0] - e[0]) * 0.13);
    const bevel = [a, b, c, d].map(([x, y]) => [x - 3, y - 1]);
    poly("bevel", bevel);
    poly("dark", [a, b, c, d]);
    add("polygon", { points: [a, b, c, d].join(" "), class: "screws" });
    poly("mid", [e, f, g, h]);
    poly("light", [h, [h[0], h[1] - k], [g[0] - k, g[1] - k / 2], g]);
    poly("sky", [e, [f[0] - k, f[1] + k / 2], [g[0] - k, g[1] - k / 2], [h[0], h[1] - k]]);
});

// ribs seen through the openings
["M614 832l10-6 3 24-12-11z", "M1048 583l2-1v8l-4-1z", "M1224 480l6-3v10l-6-3z", "M1380 390l8-4v14l-8-5z",
 "M1515 312l25-12v24l-12-1-9-6z"].forEach(d => add("path", { d, class: "mid" }));
add("path", { d: "M616 834l8 5M616 838l9 5M1519 312l19-3M1524 308l14-6M1520 315l16 4", fill: "none" });

// covers joined to the first and the last windows
poly("light", [[611,772],[628,762],[634,762],[617,774],[620,814],[567,846],[567,842],[616,813]]);
poly("dark", [[616,772],[634,762],[646,862],[639,864],[633,818],[620,814]]);
poly("light", [[1543,254],[1561,244],[1565,245],[1547,256],[1539,294],[1536,293]]);
poly("dark", [[1547,256],[1564,246],[1564,255],[1555,260],[1551,304],[1548,307],[1546,294],[1539,294]]);

// cover plates
const plates = [
    [[758,688],[773,681],[780,728],[762,736]], [[979,567],[993,560],[995,605],[982,612]],
    [[1170,459],[1184,455],[1184,498],[1170,503]], [[1339,367],[1351,363],[1348,405],[1337,408]],
    [[1493,283],[1504,277],[1501,318],[1490,322]]
];
plates.forEach(p => {
    poly("bevel", p.map(([x, y]) => [x - 3, y]));
    poly("dark", p);
});

// side plugs
[[591,793],[693,735],[834,657],[922,608],[1044,540],[1121,497],[1227,438],[1294,400],[1388,348],[1447,315],[1531,268],[1584,239]]
    .forEach(([cx, cy], i) => {
        const r = 5 - i * 0.15;
        add("circle", { cx, cy, r, class: "mid" });
        add("circle", { cx: cx + 1, cy, r: r - 2, class: "mid" });
    });

// flange bolts get closer with distance
for (let t = 0.015, step = 0.0165; t < 0.99; t += step) {
    const x = 540 + 1071 * t, y = 931 - 634 * t;
    add("ellipse", { cx: x, cy: y, rx: 2 - t, ry: 2.5 - t, class: "dark" });
    step = 0.0165 - 0.006 * t;
}

// axis triad
const axes = add("g", { class: "axes" }, model);
[["M277 1014V996", "M277 989l4 11h-8z", "#00a800"], ["M277 1014L290 1021", "M298 1026l-11-2 4-6z", "#e00000"],
 ["M277 1014L266 1020", "M256 1026l7-8 4 6z", "#0070d8"]].forEach(([line, head, color]) => {
    add("path", { d: line, stroke: color, "stroke-width": 3 }, axes);
    add("path", { d: head, fill: color }, axes);
});
[["Y", 277, 987, "#4fdc4f"], ["X", 303, 1034, "#e84040"], ["Z", 250, 1034, "#60a0e8"]].forEach(([s, x, y, fill]) => {
    add("text", { x, y, fill }, axes).textContent = s;
});
```

FILE: styles.css
```css
* {
    box-sizing: border-box;
}

body {
    margin: 0;
    height: 100vh;
    display: flex;
    flex-direction: column;
    overflow: hidden;
    background: linear-gradient(to right, #d4d0c8, #ffffff);
    font-family: "DejaVu Sans Condensed", "DejaVu Sans", sans-serif;
    font-size: 11px;
    color: #000;
}

button, select, input {
    font: inherit;
    color: inherit;
    margin: 0;
    padding: 0;
    border: 0;
    border-radius: 0;
    background: none;
}

h1, h2, p, ul {
    margin: 0;
    padding: 0;
    font-size: 11px;
}

.sprite {
    position: absolute;
    width: 0;
    height: 0;
}

/* Title bar */
.titlebar {
    display: flex;
    align-items: center;
    height: 18px;
    padding: 0 2px;
    background: linear-gradient(to right, #0a246a, #a6caf0);
    color: #fff;
    flex: none;
}

.logo {
    width: 16px;
    height: 16px;
    margin-right: 2px;
}

.titlebar h1 {
    flex: 1;
    font-weight: bold;
    white-space: nowrap;
}

.winbtns {
    display: flex;
}

.winbtns button {
    width: 16px;
    height: 14px;
    display: grid;
    place-items: center;
    background: #d4d0c8;
    border: 1px solid;
    border-color: #fff #404040 #404040 #fff;
}

.winbtns .close {
    margin-left: 2px;
}

.winbtns svg, .mdibtns svg, .panel-title svg {
    width: 10px;
    height: 10px;
    display: block;
}

/* Menu */
.menubar {
    display: flex;
    align-items: center;
    height: 25px;
    padding: 2px 3px 0;
    gap: 14px;
    flex: none;
}

.menubar a {
    color: #000;
    text-decoration: none;
}

.ico {
    width: 16px;
    height: 16px;
    margin: 0 -6px 0 -11px;
}

.mdibtns {
    display: flex;
    gap: 5px;
    margin-left: auto;
}

.mdibtns button:first-child {
    margin-right: 1px;
}

.grip {
    width: 2px;
    height: 16px;
    background: repeating-linear-gradient(#8c8a84 0 2px, transparent 2px 4px);
    flex: none;
}

/* Toolbars */
.toolrow {
    display: flex;
    gap: 3px;
    height: 26px;
    padding-left: 2px;
    flex: none;
}

.toolbar {
    display: flex;
    align-items: center;
    padding-left: 2px;
    background: linear-gradient(#fff, #f4f2ee 40%, #c4c0b6);
    border-bottom: 1px solid #8c8880;
    border-radius: 2px 4px 4px 2px;
}

.toolbar .grip {
    margin-right: 5px;
}

.tb {
    width: 22px;
    height: 22px;
    display: flex;
    align-items: center;
    justify-content: center;
    flex: none;
}

.tb svg {
    width: 18px;
    height: 18px;
    flex: none;
}

.tb.on {
    border: 1px solid #0a246a;
    background: #d0d4e0;
}

.tb.wide {
    width: 35px;
    gap: 4px;
}

.fx {
    color: #000080;
    font-size: 13px;
}

.arrow, .drop::before {
    content: "";
    display: block;
    border: 3px solid transparent;
    border-top-color: #000;
    border-bottom: 0;
}

.drop {
    width: 11px;
    height: 22px;
    display: grid;
    place-items: center;
}

.drop.roomy {
    width: 13px;
}

.drop.off::before {
    border-top-color: #8a8078;
}

.sep {
    width: 1px;
    height: 17px;
    margin: 0 4px 0 3px;
    background: #9c9890;
    flex: none;
}

.cap {
    align-self: stretch;
    width: 9px;
    margin-left: 3px;
    background: linear-gradient(#c8c4bc, #86827a);
    border-radius: 0 4px 4px 0;
    display: grid;
    align-items: end;
    justify-items: center;
    padding-bottom: 2px;
}

.cap::before {
    content: "";
    width: 6px;
    height: 6px;
    border-top: 1px solid #000;
    background: linear-gradient(#fff, #fff) 0 0 / 6px 1px no-repeat, conic-gradient(from -45deg at 50% 100%, #000 90deg, transparent 0) 0 2px / 6px 3px no-repeat;
}

.cap.far {
    margin-left: 12px;
}

.combo {
    appearance: none;
    height: 21px;
    padding: 0 18px 0 5px;
    border: 1px solid #808080;
    background-color: #fff;
    background-image: linear-gradient(to right, #808080 1px, transparent 1px), url("data:image/svg+xml,%3Csvg xmlns='http://www.w3.org/2000/svg' width='7' height='4'%3E%3Cpath d='M0 0h7L3.5 4z'/%3E%3C/svg%3E"), linear-gradient(#f4f2ee, #d4d0c8);
    background-repeat: no-repeat;
    background-position: right 14px center, right 4px center, right;
    background-size: 1px 100%, 7px 4px, 14px 100%;
}

.combo:disabled {
    background-color: #d4d0c8;
    opacity: 1;
}

.scale {
    width: 66px;
}

.stepval {
    width: 60px;
}

.layer {
    width: 86px;
}

.coord {
    width: 49px;
    height: 21px;
    margin-right: 1px;
    border: 1px solid #808080;
    background: #d4d0c8;
}

/* Workspace */
.workspace {
    flex: 1;
    min-height: 0;
    display: flex;
    padding: 0 2px 3px 0;
}

.sidebar {
    width: 26px;
    flex: none;
    align-self: flex-start;
    background: linear-gradient(to right, #f8f7f4, #e4e1da 50%, #bcb8ae);
    border-radius: 2px 2px 4px 4px;
    padding-top: 9px;
    position: relative;
    margin-right: 1px;
}

.sidebar::before {
    content: "";
    position: absolute;
    top: 3px;
    left: 5px;
    width: 16px;
    height: 2px;
    background: repeating-linear-gradient(to right, #8c8a84 0 2px, transparent 2px 4px);
}

.compact button {
    display: flex;
    width: 20px;
    height: 17px;
    margin-left: 4px;
    align-items: center;
    padding-left: 2px;
    border-left: 2px dotted #8c8a84;
}

.compact .on {
    outline: 1px solid #0a246a;
    outline-offset: -1px;
}

.compact svg {
    width: 14px;
    height: 14px;
}

.sidebar hr {
    width: 16px;
    margin: 4px auto;
    border: 0;
    border-top: 1px solid #9c9890;
}

.ops button {
    display: grid;
    place-items: center;
    width: 22px;
    height: 22px;
    margin-left: 1px;
    position: relative;
}

.ops svg {
    width: 18px;
    height: 18px;
}

.ops .more::after {
    content: "";
    position: absolute;
    right: 1px;
    bottom: 1px;
    border: 2px solid;
    border-color: transparent #222 #222 transparent;
}

.endcap {
    height: 11px;
    background: linear-gradient(to right, #77736c, #c8c4bc);
    border-radius: 0 0 4px 4px;
    display: flex;
    justify-content: flex-end;
    align-items: center;
    padding-right: 3px;
    margin-top: 2px;
}

.endcap::before {
    content: "";
    border: 3px solid transparent;
    border-left: 4px solid #000;
    border-right: 0;
}

/* Tree panel */
.panel {
    width: 199px;
    flex: none;
    display: flex;
    flex-direction: column;
    background: #d4d0c8;
    border-left: 1px solid #808080;
}

.panel-title {
    height: 19px;
    display: flex;
    align-items: center;
    gap: 6px;
    padding: 0 5px 0 2px;
    background: linear-gradient(to right, #f4f2ee, #d4d0c8);
}

.panel-title h2 {
    flex: 1;
    font-weight: normal;
}

.panel-tools {
    height: 25px;
    display: flex;
    align-items: center;
    background: linear-gradient(#fff, #f4f2ee 40%, #c4c0b6);
    border-bottom: 1px solid #9c9890;
}

.treebox {
    flex: 1;
    min-height: 0;
    margin: 3px 4px 1px 2px;
    border: 2px solid #808080;
    border-style: double;
    border-width: 3px 2px;
    background: #fff;
    display: grid;
    grid-template: 1fr 16px / 1fr 16px;
}

.tree {
    overflow: hidden;
    min-height: 0;
    white-space: nowrap;
}

.root {
    display: flex;
    align-items: center;
    height: 20px;
    padding-left: 8px;
}

.root svg {
    width: 18px;
    height: 18px;
    margin-right: 5px;
}

.minus {
    width: 11px;
    height: 11px;
    border: 1px solid #808080;
    background: linear-gradient(#000, #000) center / 7px 1px no-repeat;
}

.dots {
    width: 8px;
    border-top: 1px dotted #808080;
}

.tree ul {
    list-style: none;
    margin-left: 36px;
    border-left: 1px dotted #808080;
}

.tree li {
    display: flex;
    align-items: center;
    height: 20px;
}

.tree li::before {
    content: "";
    width: 13px;
    border-top: 1px dotted #808080;
    flex: none;
}

.tree li svg {
    width: 18px;
    height: 18px;
    margin-right: 8px;
    flex: none;
}

.vscroll, .hscroll {
    display: flex;
    background: repeating-conic-gradient(#fff 0 25%, #d4d0c8 0 50%) 0 0 / 2px 2px;
}

.vscroll {
    flex-direction: column;
}

.vscroll button, .hscroll button, .thumb {
    background: #d4d0c8;
    border: 1px solid;
    border-color: #fff #404040 #404040 #fff;
    display: grid;
    place-items: center;
}

.vscroll button, .hscroll button {
    width: 16px;
    height: 16px;
}

.vscroll button::before, .hscroll button::before {
    content: "";
    border: 4px solid transparent;
}

.vscroll .up::before {
    border-bottom-color: #000;
    border-top: 0;
}

.vscroll .down::before {
    border-top-color: #000;
    border-bottom: 0;
}

.hscroll .left::before {
    border-right-color: #000;
    border-left: 0;
}

.hscroll .right::before {
    border-left-color: #000;
    border-right: 0;
}

.vscroll .thumb {
    height: 67%;
    margin: 54px 0 auto;
}

.hscroll .thumb {
    width: 82px;
    margin-right: auto;
}

.corner {
    background: #d4d0c8;
}

.tabs {
    height: 20px;
    border-top: 1px solid #000;
    background: linear-gradient(#fff, #d4d0c8);
}

.tab {
    height: 19px;
    margin-left: 2px;
    padding: 0 6px 0 4px;
    background: #f4f2ea;
    border: solid #000;
    border-width: 0 1px 1px 0;
    display: block;
}

/* Model view */
.viewport {
    flex: 1;
    min-width: 0;
    margin: 1px 0 0 4px;
    background: #fff;
    border: 1px solid #d4d0c8;
    border-top-color: #404040;
    border-left: 2px solid #606060;
}

#model {
    display: block;
    width: 100%;
    height: 100%;
}

.edge {
    stroke: #1c1c1c;
    stroke-width: 1;
    stroke-linejoin: round;
}

.dark {
    fill: #727272;
}

.mid {
    fill: #ababab;
}

.bevel {
    fill: #b4b4b4;
}

.light {
    fill: #d0d0d0;
}

.sky {
    fill: #fff;
}

.bore {
    fill: url(#g-bore);
}

.stud {
    fill: #777;
}

.weld-line {
    stroke-width: 9;
    stroke: #555;
}

.weld {
    stroke-width: 7;
    stroke: #ececec;
}

.screws {
    fill: none;
    stroke-width: 2;
    stroke-dasharray: 1 14;
}

.axes text {
    font-size: 12px;
    text-anchor: middle;
}

/* Status bar */
.statusbar {
    display: flex;
    gap: 2px;
    height: 18px;
    padding-left: 4px;
    flex: none;
}

.statusbar p {
    flex: 1;
    border: 1px solid #808080;
    border-width: 1px 1px 0 1px;
    line-height: 18px;
    white-space: nowrap;
}

.statusbar span {
    width: 84px;
    border: 1px solid #808080;
    border-bottom: 0;
}
```
